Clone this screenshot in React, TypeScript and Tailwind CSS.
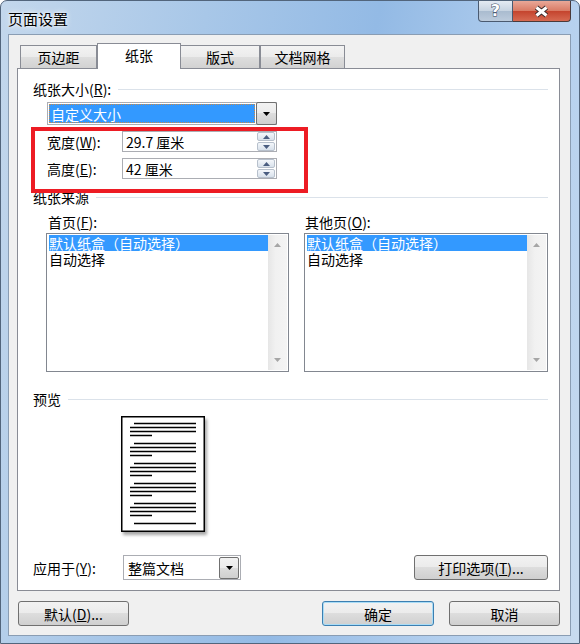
import type { ReactNode } from 'react';

const btnFace =
  'bg-[linear-gradient(to_bottom,#f2f2f2_0%,#ebebeb_50%,#dddddd_50%,#cfcfcf_100%)]';

function Arrow({ up, color = '#000' }: { up?: boolean; color?: string }) {
  return (
    <svg width="7" height="4" viewBox="0 0 7 4" className="block">
      <path d={up ? 'M3.5 0L7 4H0z' : 'M0 0h7L3.5 4z'} fill={color} />
    </svg>
  );
}

function DropButton({ className }: { className: string }) {
  return (
    <div
      className={`${className} border border-[#707070] rounded-[2px] ${btnFace} flex items-center justify-center shrink-0`}
    >
      <Arrow />
    </div>
  );
}

function Section({ children, className }: { children: ReactNode; className?: string }) {
  return (
    <div className={`flex items-center h-[16px] pl-[15px] pr-[11px] ${className ?? ''}`}>
      <span className="whitespace-nowrap">{children}</span>
      <div className="flex-1 h-px bg-[#dbe2ea] ml-[7px]" />
    </div>
  );
}

function Spinner() {
  return (
    <div className="flex flex-col gap-px w-[18px] h-[19px] shrink-0">
      <div className="flex-1 border border-[#b7c0cc] rounded-[2px] bg-[linear-gradient(to_bottom,#f4f7fb,#d8e1eb)] flex items-center justify-center">
        <Arrow up color="#4a5d80" />
      </div>
      <div className="flex-1 border border-[#b7c0cc] rounded-[2px] bg-[linear-gradient(to_bottom,#f4f7fb,#d8e1eb)] flex items-center justify-center">
        <Arrow color="#4a5d80" />
      </div>
    </div>
  );
}

function NumberField({ label, acc, value }: { label: string; acc: string; value: string }) {
  return (
    <div className="flex items-center h-[21px] pl-[29px]">
      <span className="w-[75px] whitespace-nowrap">
        {label}(<u>{acc}</u>):
      </span>
      <div className="flex items-center w-[155px] h-[21px] border border-[#abadb3] bg-white pl-[3px] pr-px">
        <span className="flex-1 whitespace-nowrap">{value}</span>
        <Spinner />
      </div>
    </div>
  );
}

function TrayList() {
  return (
    <div className="flex w-full h-[139px] border border-[#828790] bg-white p-px">
      <div className="flex-1 flex flex-col pl-px leading-[16px]">
        <div className="h-[16px] bg-[#3399ff] text-white whitespace-nowrap">默认纸盒（自动选择）</div>
        <div className="h-[16px] whitespace-nowrap">自动选择</div>
      </div>
      <div className="w-[19px] flex flex-col items-center justify-between py-[8px] bg-[linear-gradient(to_right,#e6e6e6,#f1f1f1_40%,#f4f4f4)]">
        <Arrow up color="#a6a6a6" />
        <Arrow color="#a6a6a6" />
      </div>
    </div>
  );
}

function Button({ children, className }: { children: ReactNode; className: string }) {
  return (
    <div
      className={`${className} h-[25px] rounded-[3px] border ${btnFace} flex items-center justify-center whitespace-nowrap`}
    >
      {children}
    </div>
  );
}

function Preview() {
  const groups = [0, 20, 40, 60, 80];
  return (
    <div className="w-[84px] h-[116px] ml-[103px] shadow-[2px_3px_3px_rgba(0,0,0,0.35)]">
      <svg width="84" height="116" viewBox="0 0 84 116" className="block">
        <rect x="0.75" y="0.75" width="82.5" height="114.5" fill="#fff" stroke="#000" strokeWidth="1.5" />
        {groups.map((g) => (
          <g key={g} stroke="#000" strokeWidth="1.5">
            <line x1="13" x2="75" y1={7.5 + g} y2={7.5 + g} />
            <line x1="9" x2="75" y1={11.5 + g} y2={11.5 + g} />
            <line x1="9" x2="75" y1={15.5 + g} y2={15.5 + g} />
            <line x1="9" x2="31" y1={19.5 + g} y2={19.5 + g} />
          </g>
        ))}
        <line x1="13" x2="75" y1="107.5" y2="107.5" stroke="#000" strokeWidth="1.5" />
      </svg>
    </div>
  );
}

export default function App() {
  return (
    <div className="w-[580px] h-[644px] bg-white font-['Noto_Sans_CJK_SC',sans-serif] text-[14px] leading-[16px] text-black">
      <div className="w-[580px] h-[644px] flex flex-col rounded-t-[7px] border border-[#52657c] bg-[linear-gradient(100deg,#c3d7ec_0%,#a8c7e8_30%,#93bae5_55%,#b3cfee_80%,#c8dbef_100%)] overflow-hidden">
        {/* title bar */}
        <div className="h-[33px] flex items-start pl-[7px] pr-[8px]">
          <span className="mt-[10px] text-[15px] whitespace-nowrap [text-shadow:0_0_6px_#fff,0_0_3px_#fff]">页面设置</span>
          <div className="ml-auto flex">
            <div className="w-[35px] h-[21px] rounded-bl-[4px] border border-t-0 border-[#4a5a70] bg-[linear-gradient(to_bottom,#e4ebf3_0%,#c6d3e1_50%,#a9bbcf_50%,#bccbdc_100%)] flex items-center justify-center">
              <span className="font-['DejaVu_Sans',sans-serif] text-[16px] font-bold text-white leading-[18px] [-webkit-text-stroke:1px_#34465c] [paint-order:stroke_fill]">?</span>
            </div>
            <div className="w-[58px] h-[21px] rounded-br-[4px] border border-t-0 border-l-0 border-[#4a3a3a] bg-[linear-gradient(to_bottom,#e9a898_0%,#d97a64_50%,#c4432d_50%,#d66a52_100%)] flex items-center justify-center">
              <svg width="17" height="13" viewBox="0 0 17 13">
                <path d="M3.5 2.5L13.5 10.5M13.5 2.5L3.5 10.5" stroke="#3a2a2a" strokeWidth="5" />
                <path d="M3.5 2.5L13.5 10.5M13.5 2.5L3.5 10.5" stroke="#fff" strokeWidth="3" />
              </svg>
            </div>
          </div>
        </div>

        {/* client area */}
        <div className="ml-[7px] w-[563px] h-[602px] border border-[#8a9db3] bg-[#f0f0f0] pl-[8px] pt-[8px]">
          {/* tabs */}
          <div className="flex items-end h-[25px] pl-[3px]">
            <div className="w-[77px] h-[23px] border border-b-0 border-[#898c95] bg-[linear-gradient(to_bottom,#f3f3f3_0%,#ebebeb_50%,#dedede_50%,#d2d2d2_100%)] flex items-center justify-center">
              页边距
            </div>
            <div className="w-[84px] h-[26px] -mb-px relative z-10 border border-b-0 border-[#898c95] bg-white flex items-center justify-center pb-[3px]">
              纸张
            </div>
            <div className="w-[79px] h-[23px] border border-b-0 border-l-0 border-[#898c95] bg-[linear-gradient(to_bottom,#f3f3f3_0%,#ebebeb_50%,#dedede_50%,#d2d2d2_100%)] flex items-center justify-center">
              版式
            </div>
            <div className="w-[85px] h-[23px] border border-b-0 border-[#898c95] bg-[linear-gradient(to_bottom,#f3f3f3_0%,#ebebeb_50%,#dedede_50%,#d2d2d2_100%)] flex items-center justify-center">
              文档网格
            </div>
          </div>

          {/* panel */}
          <div className="relative w-[543px] h-[523px] border border-[#898c95] bg-white flex flex-col">
            <Section className="mt-[12px]">
              纸张大小(<u>R</u>):
            </Section>

            <div className="mt-[5px] ml-[29px] flex w-[230px] h-[23px] border border-[#abadb3] bg-white">
              <div className="flex-1 m-px border border-dotted border-[#c98a4a] bg-[#3399ff] text-white pl-px flex items-center whitespace-nowrap">
                自定义大小
              </div>
              <DropButton className="w-[21px] h-[23px] -mt-px -mr-px" />
            </div>

            <div className="mt-[6px]">
              <NumberField label="宽度" acc="W" value="29.7 厘米" />
            </div>
            <div className="mt-[6px]">
              <NumberField label="高度" acc="E" value="42 厘米" />
            </div>

            <Section className="mt-[10px]">纸张来源</Section>

            <div className="mt-[9px] ml-[28px] grid grid-cols-[243px_244px] gap-x-[15px]">
              <span className="pl-[2px] whitespace-nowrap">
                首页(<u>F</u>):
              </span>
              <span className="pl-px whitespace-nowrap">
                其他页(<u>O</u>):
              </span>
              <div className="mt-[3px]">
                <TrayList />
              </div>
              <div className="mt-[3px]">
                <TrayList />
              </div>
            </div>

            <Section className="mt-[19px]">预览</Section>

            <div className="mt-[9px]">
              <Preview />
            </div>

            <div className="mt-[23px] flex items-center h-[25px] pl-[15px] pr-[11px]">
              <span className="w-[90px] whitespace-nowrap">
                应用于(<u>Y</u>):
              </span>
              <div className="flex items-center w-[118px] h-[25px] border border-[#abadb3] bg-white pl-[4px] pr-px">
                <span className="flex-1 whitespace-nowrap">整篇文档</span>
                <DropButton className="w-[20px] h-[22px]" />
              </div>
              <Button className="ml-auto w-[134px] border-[#707070]">
                打印选项(<u>T</u>)...
              </Button>
            </div>

            {/* red annotation */}
            <div className="absolute left-[13px] top-[58px] w-[277px] h-[66px] border-[4px] border-[#ed1c24] z-20 pointer-events-none" />
          </div>

          {/* dialog buttons */}
          <div className="mt-[10px] w-[543px] flex items-center">
            <Button className="ml-px w-[111px] border-[#707070]">
              默认(<u>D</u>)...
            </Button>
            <div className="ml-auto flex gap-[15px]">
              <Button className="w-[112px] border-[#3c7fb1] shadow-[inset_0_0_0_1px_#a9dcf6]">确定</Button>
              <Button className="w-[111px] border-[#707070]">取消</Button>
            </div>
          </div>
        </div>
      </div>
    </div>
  );
}
